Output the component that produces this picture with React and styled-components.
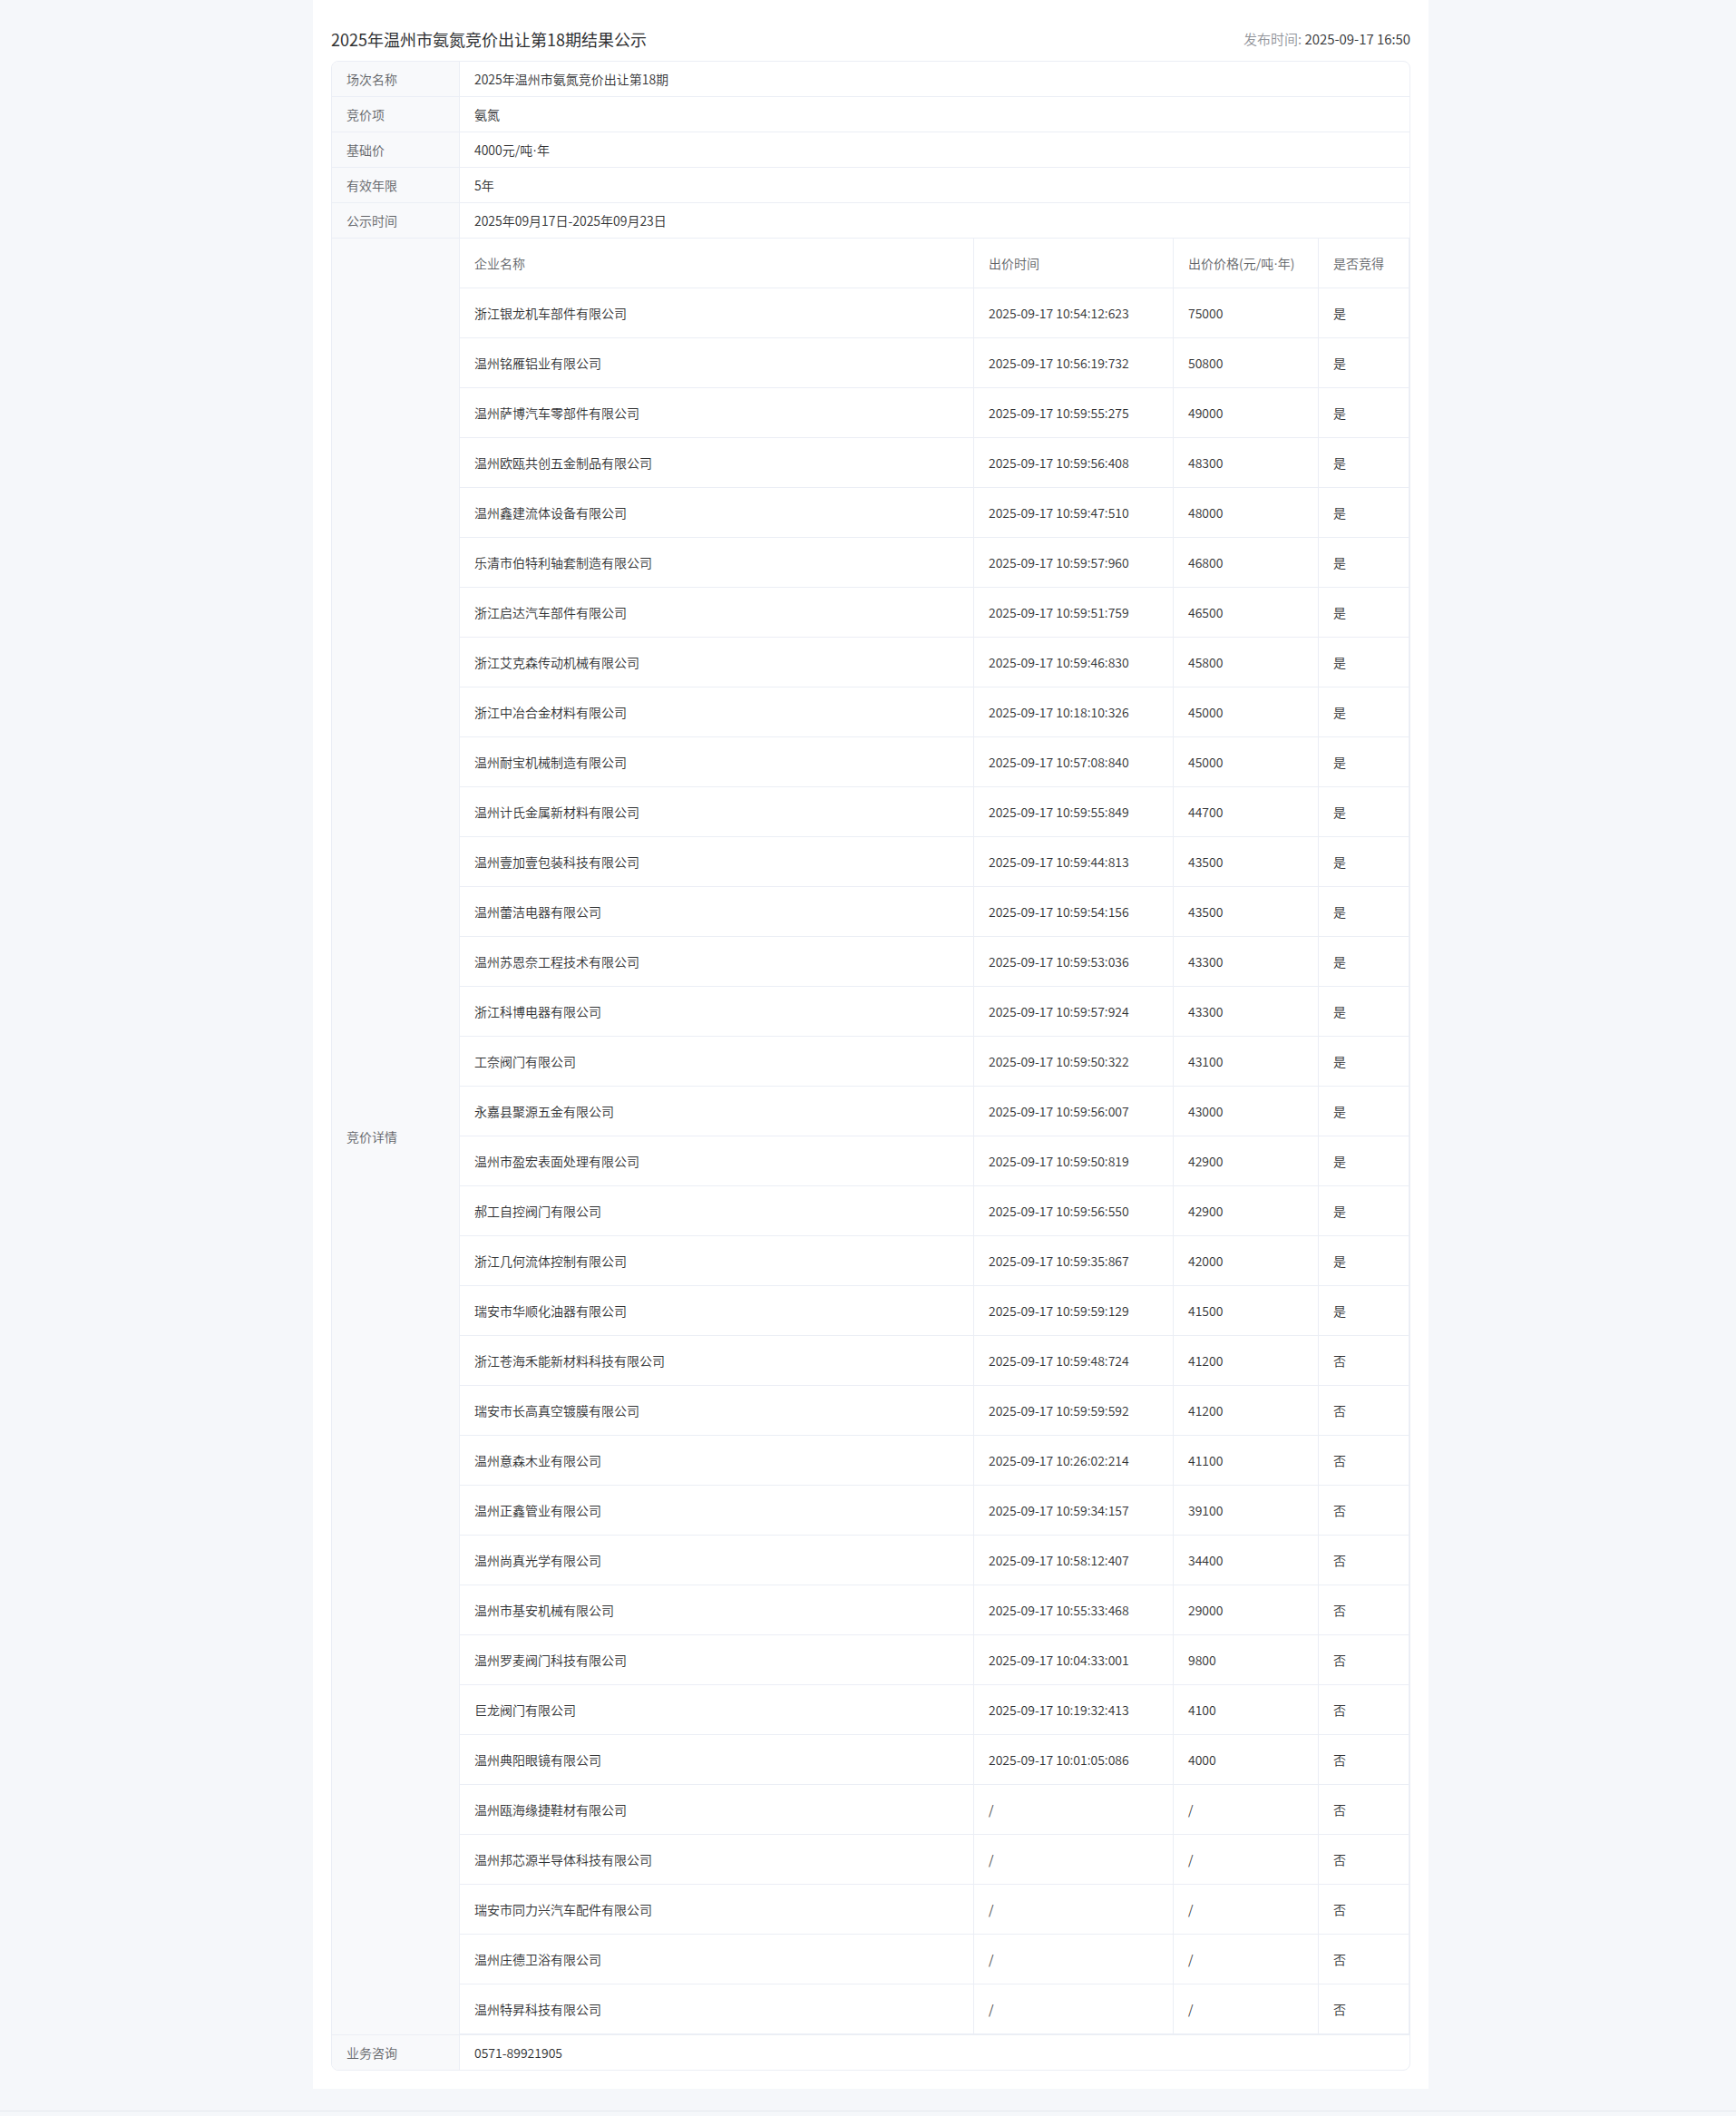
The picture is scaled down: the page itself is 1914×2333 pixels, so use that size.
import React from 'react';
import styled, { createGlobalStyle } from 'styled-components';

const GlobalStyle = createGlobalStyle`
  html, body {
    margin: 0;
    padding: 0;
  }
  body {
    background: #f5f7fa;
    font-family: "Noto Sans CJK SC", "Noto Sans", sans-serif;
    font-weight: 350;
    color: #303133;
  }
  * {
    box-sizing: border-box;
  }
`;

const Page = styled.div`
  display: flex;
  flex-direction: column;
`;

const Panel = styled.div`
  width: 1230px;
  margin-left: calc(50% - 612px);
  background: #fff;
  padding: 30px 20px 20px;
`;

const Header = styled.div`
  display: flex;
  justify-content: space-between;
  align-items: center;
  height: 26px;
  margin-bottom: 11px;
`;

const Title = styled.h1`
  margin: 0;
  font-size: 18px;
  font-weight: 400;
  color: #303133;
  line-height: 26px;
`;

const PubTime = styled.div`
  font-size: 15px;
  color: #909399;
  line-height: 26px;

  span {
    color: #303133;
  }
`;

// 吨·年 的间隔点用西文字体，避免 CJK 全角点
const Dot = styled.span`
  font-family: "Liberation Sans", sans-serif;
`;

const Table = styled.div`
  border: 1px solid #ebeef5;
  border-radius: 8px;
  overflow: hidden;
`;

const Row = styled.div`
  display: grid;
  grid-template-columns: 141px 1fr;
  border-bottom: 1px solid #ebeef5;

  &:last-child {
    border-bottom: none;
  }
`;

const Label = styled.div`
  display: flex;
  align-items: center;
  min-height: 38px;
  padding: 0 16px;
  background: #f8f9fb;
  border-right: 1px solid #ebeef5;
  font-size: 14px;
  color: #606266;
`;

const Value = styled.div`
  display: flex;
  align-items: center;
  min-height: 38px;
  padding: ${(p) => (p.$flush ? '0' : '0 16px')};
  font-size: 14px;
  color: #303133;
`;

const BidGrid = styled.div`
  width: 100%;
  display: grid;
  grid-template-columns: 1fr 220px 160px 100px;
`;

const Cell = styled.div`
  display: flex;
  align-items: center;
  height: 55px;
  padding: 0 16px;
  border-right: 1px solid #ebeef5;
  border-bottom: 1px solid #ebeef5;
  font-size: 14px;
  color: ${(p) => (p.$head ? '#606266' : '#303133')};
  white-space: nowrap;
`;

const Footer = styled.div`
  height: 5px;
  margin-top: 24px;
  border-top: 1px solid #e4e7ed;
  background: #f5f7fa;
`;

const Unit = () => (
  <>
    元/吨<Dot>·</Dot>年
  </>
);

const info = [
  ['场次名称', '2025年温州市氨氮竞价出让第18期'],
  ['竞价项', '氨氮'],
  ['基础价', <>4000<Unit /></>],
  ['有效年限', '5年'],
  ['公示时间', '2025年09月17日-2025年09月23日'],
];

const bids = [
  ['浙江银龙机车部件有限公司', '2025-09-17 10:54:12:623', '75000', '是'],
  ['温州铭雁铝业有限公司', '2025-09-17 10:56:19:732', '50800', '是'],
  ['温州萨博汽车零部件有限公司', '2025-09-17 10:59:55:275', '49000', '是'],
  ['温州欧瓯共创五金制品有限公司', '2025-09-17 10:59:56:408', '48300', '是'],
  ['温州鑫建流体设备有限公司', '2025-09-17 10:59:47:510', '48000', '是'],
  ['乐清市伯特利轴套制造有限公司', '2025-09-17 10:59:57:960', '46800', '是'],
  ['浙江启达汽车部件有限公司', '2025-09-17 10:59:51:759', '46500', '是'],
  ['浙江艾克森传动机械有限公司', '2025-09-17 10:59:46:830', '45800', '是'],
  ['浙江中冶合金材料有限公司', '2025-09-17 10:18:10:326', '45000', '是'],
  ['温州耐宝机械制造有限公司', '2025-09-17 10:57:08:840', '45000', '是'],
  ['温州计氏金属新材料有限公司', '2025-09-17 10:59:55:849', '44700', '是'],
  ['温州壹加壹包装科技有限公司', '2025-09-17 10:59:44:813', '43500', '是'],
  ['温州蕾洁电器有限公司', '2025-09-17 10:59:54:156', '43500', '是'],
  ['温州苏恩奈工程技术有限公司', '2025-09-17 10:59:53:036', '43300', '是'],
  ['浙江科博电器有限公司', '2025-09-17 10:59:57:924', '43300', '是'],
  ['工奈阀门有限公司', '2025-09-17 10:59:50:322', '43100', '是'],
  ['永嘉县聚源五金有限公司', '2025-09-17 10:59:56:007', '43000', '是'],
  ['温州市盈宏表面处理有限公司', '2025-09-17 10:59:50:819', '42900', '是'],
  ['郝工自控阀门有限公司', '2025-09-17 10:59:56:550', '42900', '是'],
  ['浙江几何流体控制有限公司', '2025-09-17 10:59:35:867', '42000', '是'],
  ['瑞安市华顺化油器有限公司', '2025-09-17 10:59:59:129', '41500', '是'],
  ['浙江苍海禾能新材料科技有限公司', '2025-09-17 10:59:48:724', '41200', '否'],
  ['瑞安市长高真空镀膜有限公司', '2025-09-17 10:59:59:592', '41200', '否'],
  ['温州意森木业有限公司', '2025-09-17 10:26:02:214', '41100', '否'],
  ['温州正鑫管业有限公司', '2025-09-17 10:59:34:157', '39100', '否'],
  ['温州尚真光学有限公司', '2025-09-17 10:58:12:407', '34400', '否'],
  ['温州市基安机械有限公司', '2025-09-17 10:55:33:468', '29000', '否'],
  ['温州罗麦阀门科技有限公司', '2025-09-17 10:04:33:001', '9800', '否'],
  ['巨龙阀门有限公司', '2025-09-17 10:19:32:413', '4100', '否'],
  ['温州典阳眼镜有限公司', '2025-09-17 10:01:05:086', '4000', '否'],
  ['温州瓯海缘捷鞋材有限公司', '/', '/', '否'],
  ['温州邦芯源半导体科技有限公司', '/', '/', '否'],
  ['瑞安市同力兴汽车配件有限公司', '/', '/', '否'],
  ['温州庄德卫浴有限公司', '/', '/', '否'],
  ['温州特昇科技有限公司', '/', '/', '否'],
];

const heads = ['企业名称', '出价时间', <>出价价格(<Unit />)</>, '是否竞得'];

const App = () => {
  return (
    <Page>
      <GlobalStyle />
      <Panel>
        <Header>
          <Title>2025年温州市氨氮竞价出让第18期结果公示</Title>
          <PubTime>
            发布时间: <span>2025-09-17 16:50</span>
          </PubTime>
        </Header>

        <Table>
          {info.map(([k, v]) => (
            <Row key={k}>
              <Label>{k}</Label>
              <Value>{v}</Value>
            </Row>
          ))}

          <Row>
            <Label>竞价详情</Label>
            <Value $flush>
              <BidGrid>
                {heads.map((h, i) => (
                  <Cell $head key={'h' + i}>{h}</Cell>
                ))}
                {bids.map((b, i) =>
                  b.map((c, j) => <Cell key={i + '-' + j}>{c}</Cell>)
                )}
              </BidGrid>
            </Value>
          </Row>

          <Row>
            <Label>业务咨询</Label>
            <Value>0571-89921905</Value>
          </Row>
        </Table>
      </Panel>
      <Footer />
    </Page>
  );
};

export default App;
